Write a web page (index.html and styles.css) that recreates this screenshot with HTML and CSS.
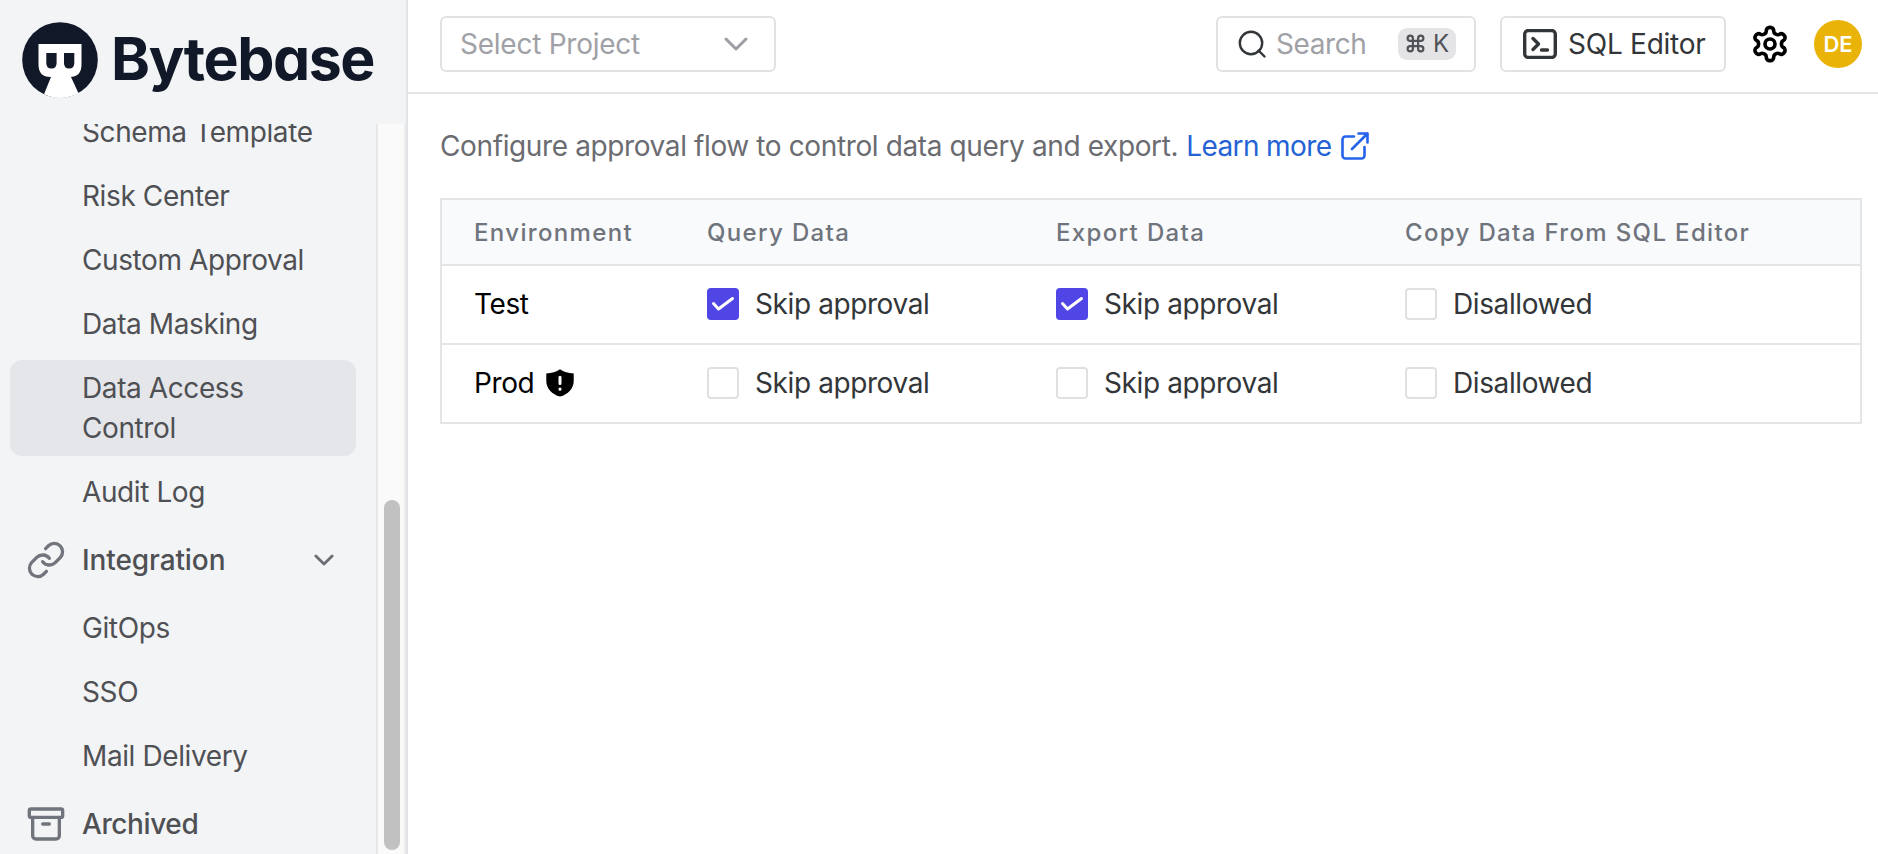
FILE: index.html
```html
<!DOCTYPE html>
<html lang="en">
<head>
<meta charset="utf-8">
<title>Bytebase</title>
<link rel="stylesheet" href="styles.css">
</head>
<body>
<div class="app">
  <aside class="sidebar">
    <a class="brand">
      <svg class="brand-mark" viewBox="0 0 76 76">
        <circle cx="38" cy="38" r="37.8" fill="#111827"/>
        <path fill="#fff" d="M16.500 22H59.500V42.500Q59.500 55 47.500 55H49L56.500 71.200A38 38 0 0 1 22 72.300L29 55H28.500Q16.500 55 16.500 42.500Z"/>
        <path fill="#111827" d="M24.300 31H34.600V41Q34.600 46.500 29.450 46.500Q24.300 46.500 24.300 41ZM42 31H52.300V41Q52.300 46.500 47.150 46.500Q42 46.500 42 41Z"/>
      </svg>
      <span class="brand-name">Bytebase</span>
    </a>
    <div class="nav-scroll">
      <nav class="nav">
        <a class="item">Schema Template</a>
        <a class="item">Risk Center</a>
        <a class="item">Custom Approval</a>
        <a class="item">Data Masking</a>
        <a class="item active">Data Access Control</a>
        <a class="item">Audit Log</a>
        <a class="group">
          <svg class="group-icon" viewBox="0 0 24 24"><path d="M10 13a5 5 0 0 0 7.540.540l3-3a5 5 0 0 0-7.070-7.070l-1.720 1.710"/><path d="M14 11a5 5 0 0 0-7.540-.540l-3 3a5 5 0 0 0 7.070 7.070l1.710-1.710"/></svg>
          <span class="wide">Integration</span>
          <svg class="group-arrow" viewBox="0 0 24 24"><path d="m5 8.500 7 7 7-7"/></svg>
        </a>
        <a class="item">GitOps</a>
        <a class="item">SSO</a>
        <a class="item">Mail Delivery</a>
        <a class="group">
          <svg class="group-icon" viewBox="0 0 24 24"><rect x="2" y="3" width="20" height="5" rx="1"/><path d="M4 8v11a2 2 0 0 0 2 2h12a2 2 0 0 0 2-2V8M10 12h4"/></svg>
          <span>Archived</span>
        </a>
      </nav>
      <div class="track"><div class="thumb"></div></div>
    </div>
  </aside>
  <div class="main">
    <header class="topbar">
      <div class="box select"><span>Select Project</span>
        <svg class="select-arrow" viewBox="0 0 24 14"><path d="m2 2 10 10L22 2"/></svg>
      </div>
      <div class="tools">
        <div class="box search">
          <svg class="search-icon" viewBox="0 0 28 28"><circle cx="13" cy="13" r="11.200"/><path d="m20.500 20.500 6 6"/></svg>
          <span>Search</span>
          <kbd class="keys"><svg class="cmd" viewBox="0 0 24 24"><path d="M15 6v12a3 3 0 1 0 3-3H6a3 3 0 1 0 3 3V6a3 3 0 1 0-3 3h12a3 3 0 1 0-3-3"/></svg><span>K</span></kbd>
        </div>
        <div class="box sql">
          <svg class="sql-icon" viewBox="0 0 34 30"><rect x="1.700" y="1.600" width="30.600" height="26.800" rx="3.500"/><path d="m10 9.500 5.500 5.500-5.500 5.500M18.500 21h6"/></svg>
          <span>SQL Editor</span>
        </div>
        <svg class="gear" viewBox="0 0 24 24"><path d="M12.220 2h-.440a2 2 0 0 0-2 2v.180a2 2 0 0 1-1 1.730l-.430.250a2 2 0 0 1-2 0l-.150-.080a2 2 0 0 0-2.730.730l-.220.380a2 2 0 0 0 .730 2.730l.150.100a2 2 0 0 1 1 1.720v.510a2 2 0 0 1-1 1.740l-.150.090a2 2 0 0 0-.730 2.730l.220.380a2 2 0 0 0 2.730.730l.150-.080a2 2 0 0 1 2 0l.430.250a2 2 0 0 1 1 1.730V20a2 2 0 0 0 2 2h.440a2 2 0 0 0 2-2v-.180a2 2 0 0 1 1-1.730l.430-.250a2 2 0 0 1 2 0l.150.080a2 2 0 0 0 2.730-.730l.220-.390a2 2 0 0 0-.730-2.730l-.150-.080a2 2 0 0 1-1-1.740v-.500a2 2 0 0 1 1-1.740l.150-.090a2 2 0 0 0 .730-2.730l-.220-.380a2 2 0 0 0-2.730-.730l-.150.080a2 2 0 0 1-2 0l-.430-.250a2 2 0 0 1-1-1.730V4a2 2 0 0 0-2-2z"/><circle cx="12" cy="12" r="3"/></svg>
        <div class="avatar">DE</div>
      </div>
    </header>
    <main class="content">
      <p class="intro"><span>Configure approval flow to control data query and export.</span>
        <a class="more">Learn more
          <svg class="ext" viewBox="0 0 28 28"><path d="M13 4.500H4.500a3 3 0 0 0-3 3v16a3 3 0 0 0 3 3h16a3 3 0 0 0 3-3V15M17.500 1.500h9v9M26.500 1.500 11 17"/></svg>
        </a>
      </p>
      <div class="table">
        <div class="row head"><span>Environment</span><span>Query Data</span><span>Export Data</span><span>Copy Data From SQL Editor</span></div>
        <div class="row">
          <span class="env">Test</span>
          <label class="opt"><i class="check on"><svg viewBox="0 0 32 32"><path d="m6.500 15.500 5 5.500L25.500 10.500"/></svg></i>Skip approval</label>
          <label class="opt"><i class="check on"><svg viewBox="0 0 32 32"><path d="m6.500 15.500 5 5.500L25.500 10.500"/></svg></i>Skip approval</label>
          <label class="opt"><i class="check"></i>Disallowed</label>
        </div>
        <div class="row">
          <span class="env">Prod
            <svg class="shield" viewBox="0 0 28 28"><path d="M14 .300C10.500 3 5.500 4.200.300 4.600V12C.300 19.500 6 25.500 14 27.600 22 25.500 27.700 19.500 27.700 12V4.600C22.500 4.200 17.500 3 14 .300Z"/><path class="bang" d="M14 8.200v6.300M14 20v.200"/></svg>
          </span>
          <label class="opt"><i class="check"></i>Skip approval</label>
          <label class="opt"><i class="check"></i>Skip approval</label>
          <label class="opt"><i class="check"></i>Disallowed</label>
        </div>
      </div>
    </main>
  </div>
</div>
</body>
</html>
```

FILE: styles.css
```css
* { box-sizing: border-box; }
body { margin: 0; font-family: Inter, "Liberation Sans", sans-serif; font-size: 28px; line-height: 40px; letter-spacing: -0.4px; background: #fff; }
svg { display: block; flex: none; fill: none; stroke-linecap: round; stroke-linejoin: round; }
.app { display: flex; width: 1878px; height: 854px; overflow: hidden; }

.sidebar { display: flex; flex-direction: column; flex: none; width: 408px; background: #f3f4f6; border-right: 2px solid #e2e3e6; }
.brand { display: flex; align-items: center; flex: none; height: 124px; padding: 0 0 5px 22px; }
.brand-mark { width: 76px; height: 76px; }
.brand-name { margin: 0 0 2px 13px; font-size: 59px; font-weight: 700; line-height: 76px; letter-spacing: -1.4px; font-feature-settings: "cv11"; color: #111827; white-space: nowrap; }
.nav-scroll { display: flex; flex: 1; min-height: 0; overflow: hidden; }
.nav { display: flex; flex-direction: column; flex: none; gap: 8px; width: 376px; height: 752px; margin-top: -20px; padding: 0 20px 0 10px; color: #4f5054; }
.item { flex: none; padding: 8px 90px 8px 72px; border-radius: 12px; white-space: nowrap; }
.item.active { background: #e5e6ea; white-space: normal; }
.group { display: flex; align-items: center; flex: none; height: 64px; padding: 0 18px 0 16px; font-weight: 500; }
.wide { letter-spacing: -0.1px; }
.group-icon { width: 40px; height: 40px; margin-right: 16px; stroke: #70747c; stroke-width: 2; }
.group-arrow { width: 28px; height: 28px; margin-left: auto; stroke: #6b6e74; stroke-width: 2.400; }
.track { display: flex; align-items: flex-end; justify-content: center; width: 30px; padding: 0 0 4px 2px; background: #fafafa; border-left: 2px solid #e8e8e8; border-right: 2px solid #ececec; }
.thumb { width: 16px; height: 350px; border-radius: 8px; background: #c1c1c1; }

.main { flex: 1; min-width: 0; }
.topbar { display: flex; justify-content: space-between; height: 94px; padding: 16px 16px 0 32px; border-bottom: 2px solid #e4e5e7; }
.box { display: flex; align-items: center; height: 56px; border: 2px solid #e2e2e5; border-radius: 6px; white-space: nowrap; letter-spacing: -0.25px; }
.select { width: 336px; justify-content: space-between; padding: 0 26px 0 18px; color: #a0a1a6; }
.select-arrow { width: 24px; height: 14px; stroke: #9c9ea3; stroke-width: 3; }
.tools { display: flex; }
.search { width: 260px; padding: 0 18px 0 20px; color: #a0a1a6; letter-spacing: -0.4px; }
.search-icon { width: 28px; height: 28px; margin-right: 10px; stroke: #333639; stroke-width: 2.400; }
.keys { display: flex; align-items: center; gap: 7px; width: 58px; height: 32px; margin-left: auto; padding: 0 7px; border-radius: 9px; background: #e4e4e6; color: #515257; font: 400 24px/32px Inter, sans-serif; }
.cmd { width: 21px; height: 21px; margin-bottom: 2px; stroke: #515257; stroke-width: 2.500; }
.sql { width: 226px; margin-left: 24px; padding-left: 21px; color: #333639; }
.sql-icon { width: 34px; height: 30px; margin-right: 11px; stroke: #333639; stroke-width: 3.400; }
.gear { width: 40px; height: 40px; margin: 8px 24px 0; stroke: #000; stroke-width: 2.200; }
.avatar { width: 48px; height: 48px; margin-top: 4px; border-radius: 50%; background: #eab308; color: #fff; font-size: 22px; font-weight: 600; line-height: 48px; letter-spacing: 0; text-align: center; }

.content { padding: 32px 16px 0 32px; }
.intro { display: flex; gap: 8px; margin: 0 0 32px; color: #6b6c71; white-space: nowrap; letter-spacing: -0.38px; }
.more { display: flex; align-items: center; gap: 10px; color: #2563d4; letter-spacing: -0.6px; }
.ext { width: 28px; height: 28px; stroke: #2563eb; stroke-width: 2.600; }
.table { border: 2px solid #e4e5e7; }
.row { display: grid; grid-template-columns: 233px 349px 349px 1fr; align-items: center; height: 79px; padding: 0 0 1px 32px; border-top: 2px solid #e4e5e7; color: #333639; white-space: nowrap; }
.row.head { height: 64px; padding: 2px 0 0 32px; border-top: 0; background: #f9fafb; color: #6f747d; font-size: 24px; font-weight: 500; letter-spacing: 1.350px; }
.env { display: flex; align-items: center; gap: 12px; color: #000; }
.opt { display: flex; align-items: center; gap: 16px; }
.check { width: 32px; height: 32px; flex: none; border: 2px solid #e0e0e3; border-radius: 4px; background: #fff; }
.check.on { border: 0; background: #4f46e5; }
.check svg { stroke: #fff; stroke-width: 3; }
.shield { width: 28px; height: 28px; fill: #000; }
.bang { stroke: #fff; stroke-width: 3; }
```
